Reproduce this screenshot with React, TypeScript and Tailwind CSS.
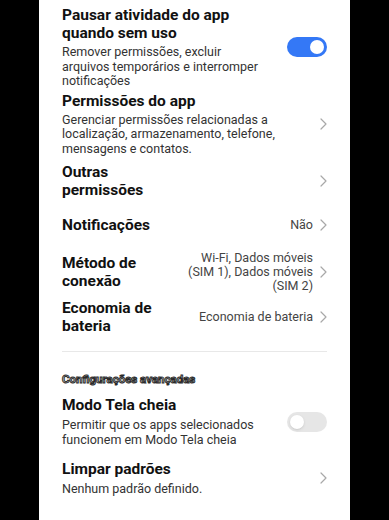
import React from "react";

function Chevron() {
  return (
    <svg className="w-[7px] h-[12px] shrink-0" viewBox="0 0 7 12" fill="none">
      <path d="M1 1l5 5-5 5" stroke="#a8a8a8" strokeWidth={1.2} strokeLinecap="round" strokeLinejoin="round" />
    </svg>
  );
}

function Toggle({ on }: { on: boolean }) {
  return (
    <div
      className={
        "w-[40px] h-[20px] rounded-full flex items-center px-[3px] shrink-0 " +
        (on ? "bg-[#3478f6] justify-end" : "bg-[#e6e6e6] justify-start")
      }
    >
      <div className={"w-[14px] h-[14px] rounded-full bg-white " + (on ? "" : "shadow-sm")} />
    </div>
  );
}

const title = "text-[15.5px] leading-[18px] font-bold text-[#111]";
const sub = "text-[12.5px] leading-[14.5px] text-[#333]";
const value = "text-[12.5px] leading-[14px] text-[#444] text-right";

export default function App() {
  return (
    <div className="h-[520px] w-full bg-black flex justify-center overflow-hidden"
      style={{ fontFamily: "Roboto, 'Noto Sans', sans-serif" }}>
      <div className="w-[311px] h-full bg-white px-[23px] flex flex-col">

        {/* Pausar atividade */}
        <div className="pt-[6px] flex items-center gap-4">
          <div className="flex-1">
            <div className={title}>Pausar atividade do app<br />quando sem uso</div>
            <div className={sub + " mt-[3px]"}>
              Remover permissões, excluir<br />arquivos temporários e interromper<br />notificações
            </div>
          </div>
          <Toggle on />
        </div>

        {/* Permissões do app */}
        <div className="mt-[3px] flex items-center gap-4">
          <div className="flex-1">
            <div className={title}>Permissões do app</div>
            <div className={sub + " mt-[3px]"}>
              Gerenciar permissões relacionadas a<br />localização, armazenamento, telefone,<br />mensagens e contatos.
            </div>
          </div>
          <Chevron />
        </div>

        {/* Outras permissões */}
        <div className="mt-[7px] flex items-center gap-4">
          <div className={title + " flex-1"}>Outras<br />permissões</div>
          <Chevron />
        </div>

        {/* Notificações */}
        <div className="mt-[17px] flex items-center">
          <div className={title + " flex-1"}>Notificações</div>
          <span className={value + " mr-[7px]"}>Não</span>
          <Chevron />
        </div>

        {/* Método de conexão */}
        <div className="mt-[17px] flex items-center">
          <div className={title + " flex-1"}>Método de<br />conexão</div>
          <span className={value + " mr-[7px]"}>
            Wi-Fi, Dados móveis<br />(SIM 1), Dados móveis<br />(SIM 2)
          </span>
          <Chevron />
        </div>

        {/* Economia de bateria */}
        <div className="mt-[6px] flex items-center">
          <div className={title + " flex-1"}>Economia de<br />bateria</div>
          <span className={value + " mr-[7px]"}>Economia de bateria</span>
          <Chevron />
        </div>

        <div className="mt-[16px] h-px bg-[#e8e8e8]" />

        <div className="mt-[19px] text-[11.5px] leading-[16px] font-bold text-[#ececec] [-webkit-text-stroke:1px_#2a2a2a]">
          Configurações avançadas
        </div>

        {/* Modo Tela cheia */}
        <div className="mt-[9px] flex items-center gap-4">
          <div className="flex-1">
            <div className={title}>Modo Tela cheia</div>
            <div className={sub + " mt-[4px]"}>
              Permitir que os apps selecionados<br />funcionem em Modo Tela cheia
            </div>
          </div>
          <Toggle on={false} />
        </div>

        {/* Limpar padrões */}
        <div className="mt-[13px] flex items-center gap-4">
          <div className="flex-1">
            <div className={title}>Limpar padrões</div>
            <div className={sub + " mt-[4px]"}>Nenhum padrão definido.</div>
          </div>
          <Chevron />
        </div>
      </div>
    </div>
  );
}
